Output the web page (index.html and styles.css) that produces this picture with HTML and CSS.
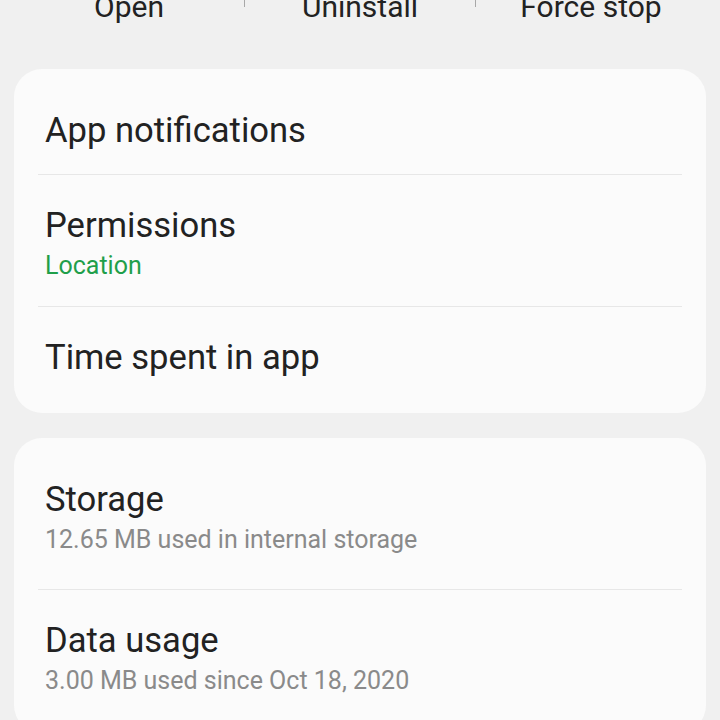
FILE: index.html
```html
<!DOCTYPE html>
<html lang="en">
<head>
<meta charset="utf-8">
<title>App info</title>
<link rel="stylesheet" href="styles.css">
</head>
<body>
<div class="screen">
  <div class="actions">
    <div class="action">Open</div>
    <div class="sep"></div>
    <div class="action">Uninstall</div>
    <div class="sep"></div>
    <div class="action">Force stop</div>
  </div>

  <section class="card">
    <div class="row">
      <div class="title">App notifications</div>
    </div>
    <div class="divider"></div>
    <div class="row">
      <div class="title">Permissions</div>
      <div class="sub sub-green">Location</div>
    </div>
    <div class="divider"></div>
    <div class="row">
      <div class="title">Time spent in app</div>
    </div>
  </section>

  <section class="card">
    <div class="row row-tall">
      <div class="title">Storage</div>
      <div class="sub">12.65 MB used in internal storage</div>
    </div>
    <div class="divider"></div>
    <div class="row">
      <div class="title">Data usage</div>
      <div class="sub">3.00 MB used since Oct 18, 2020</div>
    </div>
  </section>
</div>
</body>
</html>
```

FILE: styles.css
```css
html, body {
  margin: 0;
  padding: 0;
  background: #f0f0f0;
}

body {
  font-family: Roboto, "Noto Sans", "Liberation Sans", sans-serif;
  color: #222222;
  overflow: hidden;
}

.screen {
  width: 720px;
  height: 720px;
  overflow: hidden;
}

.actions {
  display: flex;
  margin: -11px 14px 44px;
  height: 36px;
}

.action {
  flex: 1;
  text-align: center;
  font-size: 30px;
  line-height: 36px;
  color: #222222;
}

.sep {
  width: 1px;
  height: 18px;
  background: #a8a8a8;
}

.card {
  margin: 0 14px 25px;
  background: #fbfbfb;
  border-radius: 28px;
  padding: 11px 0 12px;
}

.row {
  padding: 30px 31px 24px;
}

.row-tall {
  padding-bottom: 33px;
}

.title {
  font-size: 34.6px;
  line-height: 40px;
  color: #222222;
}

.sub {
  margin-top: 5px;
  font-size: 25px;
  line-height: 32px;
  color: #8a8a8a;
}

.sub-green {
  color: #1f9f4a;
}

.divider {
  height: 1px;
  margin: 0 24px;
  background: #e7e7e7;
}
```
